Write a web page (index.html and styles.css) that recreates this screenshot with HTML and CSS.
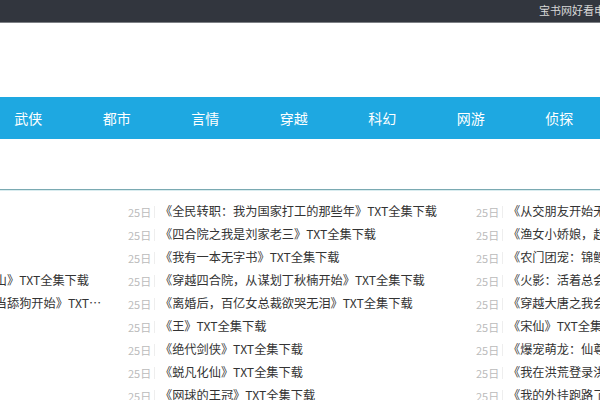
FILE: index.html
```html
<!DOCTYPE html>
<html lang="zh-CN">
<head>
<meta charset="utf-8">
<title>宝书网</title>
<link rel="stylesheet" href="styles.css">
</head>
<body>
<div class="topbar"><div class="topbar-inner">宝书网好看电子书免费下载</div></div>
<div class="header"></div>
<nav class="nav">
  <a>武侠</a><a>都市</a><a>言情</a><a>穿越</a><a>科幻</a><a>网游</a><a>侦探</a>
</nav>
<div class="rule"></div>
<div class="lists">
  <ul class="col">
    <li><span class="date">25日</span><span class="title">《斗破》TXT全集下载</span></li>
    <li><span class="date">25日</span><span class="title">《仙逆》TXT全集下载</span></li>
    <li><span class="date">25日</span><span class="title">《武动乾坤》TXT全集下载</span></li>
    <li><span class="date">25日</span><span class="title">《修仙从砍柴开始，一斧劈开万重山》TXT全集下载</span></li>
    <li><span class="date">25日</span><span class="title">《都市重生：离婚后我从拒绝继续当舔狗开始》TXT全集下载</span></li>
    <li><span class="date">25日</span><span class="title">《剑来》TXT全集下载</span></li>
    <li><span class="date">25日</span><span class="title">《雪中》TXT全集下载</span></li>
    <li><span class="date">25日</span><span class="title">《牧神记》TXT全集下载</span></li>
    <li><span class="date">25日</span><span class="title">《大奉》TXT全集下载</span></li>
  </ul>
  <ul class="col">
    <li><span class="date">25日</span><span class="title">《全民转职：我为国家打工的那些年》TXT全集下载</span></li>
    <li><span class="date">25日</span><span class="title">《四合院之我是刘家老三》TXT全集下载</span></li>
    <li><span class="date">25日</span><span class="title">《我有一本无字书》TXT全集下载</span></li>
    <li><span class="date">25日</span><span class="title">《穿越四合院，从谋划丁秋楠开始》TXT全集下载</span></li>
    <li><span class="date">25日</span><span class="title">《离婚后，百亿女总裁欲哭无泪》TXT全集下载</span></li>
    <li><span class="date">25日</span><span class="title">《王》TXT全集下载</span></li>
    <li><span class="date">25日</span><span class="title">《绝代剑侠》TXT全集下载</span></li>
    <li><span class="date">25日</span><span class="title">《蜕凡化仙》TXT全集下载</span></li>
    <li><span class="date">25日</span><span class="title">《网球的王冠》TXT全集下载</span></li>
  </ul>
  <ul class="col">
    <li><span class="date">25日</span><span class="title">《从交朋友开始无敌》TXT全集下载</span></li>
    <li><span class="date">25日</span><span class="title">《渔女小娇娘，赶海发家忙》TXT全集下载</span></li>
    <li><span class="date">25日</span><span class="title">《农门团宠：锦鲤福妻有点甜》TXT全集下载</span></li>
    <li><span class="date">25日</span><span class="title">《火影：活着总会遇见的》TXT全集下载</span></li>
    <li><span class="date">25日</span><span class="title">《穿越大唐之我会修仙》TXT全集下载</span></li>
    <li><span class="date">25日</span><span class="title">《宋仙》TXT全集下载</span></li>
    <li><span class="date">25日</span><span class="title">《爆宠萌龙：仙尊的小娇妻》TXT全集下载</span></li>
    <li><span class="date">25日</span><span class="title">《我在洪荒登录洪荒》TXT全集下载</span></li>
    <li><span class="date">25日</span><span class="title">《我的外挂跑路了》TXT全集下载</span></li>
  </ul>
</div>
</body>
</html>
```
FILE: styles.css
```css
html, body {
  margin: 0;
  padding: 0;
  background: #fff;
}
body {
  width: 600px;
  height: 400px;
  overflow: hidden;
  font-family: "Noto Sans CJK SC", "Microsoft YaHei", sans-serif;
  color: #333;
}
.topbar {
  height: 22px;
  background: #32363e;
  border-bottom: 1px solid #7d8085;
  overflow: hidden;
}
.topbar-inner {
  padding-left: 539px;
  white-space: nowrap;
  font-size: 11px;
  line-height: 20px;
  color: #d8d8d8;
}
.header {
  height: 74px;
}
.nav {
  display: flex;
  height: 42px;
  background: #1ea8e1;
  margin-left: -16px;
  white-space: nowrap;
}
.nav a {
  flex: 0 0 88.5px;
  text-align: center;
  color: #fff;
  font-size: 14px;
  line-height: 42px;
}
.rule {
  margin-top: 50px;
  border-top: 1px solid #7aaab2;
  border-bottom: 1px solid #d9ecef;
}
.lists {
  display: flex;
  margin-left: -220px;
  margin-top: 9px;
}
.col {
  list-style: none;
  margin: 0;
  padding: 0;
  flex: 0 0 348px;
  width: 348px;
  overflow: hidden;
}
.col li {
  display: flex;
  align-items: center;
  height: 23px;
  white-space: nowrap;
}
.date {
  flex: 0 0 auto;
  width: 26px;
  font-size: 11px;
  line-height: 12px;
  color: #bbb;
  border-right: 1px solid #eee;
}
.title {
  margin-left: 5px;
  width: 293px;
  overflow: hidden;
  text-overflow: ellipsis;
  font-size: 12.2px;
  line-height: 23px;
  color: #333;
}
```
